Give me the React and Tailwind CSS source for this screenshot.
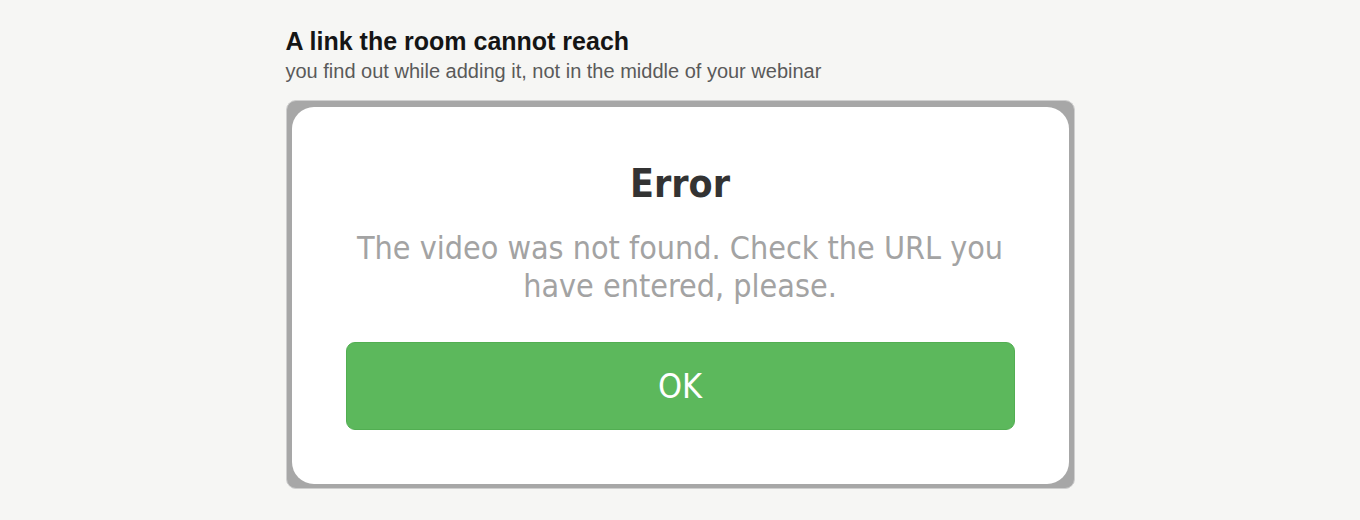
export default function App() {
  return (
    <div className="min-h-[520px] w-full bg-[#f6f6f4] flex justify-center pt-[26px]">
      <div className="w-[789px] flex flex-col">
        <h1 className="text-[25px] leading-[30px] font-bold text-[#151515]" style={{ fontFamily: '"Liberation Sans", Arial, sans-serif' }}>
          A link the room cannot reach
        </h1>
        <p className="text-[20px] leading-[24px] text-[#5a5a5a] mt-[3px]" style={{ fontFamily: '"Liberation Sans", Arial, sans-serif' }}>
          you find out while adding it, not in the middle of your webinar
        </p>
        <div className="mt-[17px] h-[389px] rounded-[10px] bg-[#a7a7a7] border border-[#cfcfcf] pt-[6px] pb-[4px] pl-[5px] pr-[5px] flex">
          <div className="flex-1 rounded-[22px] bg-white flex flex-col items-center pt-[53px] px-[54px]" style={{ fontFamily: '"DejaVu Sans Condensed", "DejaVu Sans", Verdana, sans-serif' }}>
            <div className="text-[39px] leading-[48px] font-bold text-[#333333]">Error</div>
            <div className="mt-[21px] text-[32px] leading-[38px] text-[#a3a3a3] text-center whitespace-nowrap">
              The video was not found. Check the URL you<br />have entered, please.
            </div>
            <button className="mt-[37px] w-full h-[88px] shrink-0 rounded-[9px] bg-[#5cb85c] border border-[#52ae52] text-white text-[34px] flex items-center justify-center">
              OK
            </button>
          </div>
        </div>
      </div>
    </div>
  );
}
